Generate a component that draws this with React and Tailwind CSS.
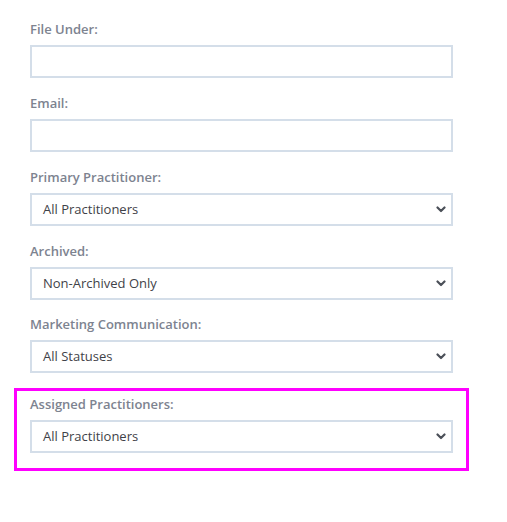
import React from "react";

const font = { fontFamily: '"Open Sans", "Liberation Sans", sans-serif' };

function Chevron() {
  return (
    <svg width="10" height="7" viewBox="0 0 10 7" className="shrink-0">
      <path d="M1.5 1.5 L5 5 L8.5 1.5" fill="none" stroke="#4b5058" strokeWidth="2.2" strokeLinecap="round" strokeLinejoin="round" />
    </svg>
  );
}

function Label({ children }) {
  return (
    <div className="text-[13px] leading-[20px] font-semibold text-[#7d8390] mb-[6px]">{children}</div>
  );
}

function Input() {
  return <div className="w-[423px] h-[33px] border-2 border-[#d4dee9] bg-white" />;
}

function Select({ value }) {
  return (
    <div className="w-[423px] h-[33px] border-2 border-[#d4dee9] bg-white flex items-center justify-between pl-[11px] pr-[5px]">
      <span className="text-[13px] text-[#3f4248]">{value}</span>
      <Chevron />
    </div>
  );
}

function Field({ label, value, select, tight }) {
  return (
    <div className={tight ? "mb-[14px]" : "mb-[15px]"}>
      <Label>{label}</Label>
      {select ? <Select value={value} /> : <Input />}
    </div>
  );
}

export default function App() {
  return (
    <div className="w-[507px] h-[522px] bg-white pt-[19px] pl-[30px]" style={font}>
      <Field label="File Under:" />
      <Field label="Email:" />
      <Field label="Primary Practitioner:" select value="All Practitioners" />
      <Field label="Archived:" select value="Non-Archived Only" tight />
      <Field label="Marketing Communication:" select value="All Statuses" />
      <div className="-ml-[16px] w-[455px] border-[3px] border-[#ff00ff] pl-[13px] pt-[3px] pb-[15px]">
        <Label>Assigned Practitioners:</Label>
        <Select value="All Practitioners" />
      </div>
    </div>
  );
}
